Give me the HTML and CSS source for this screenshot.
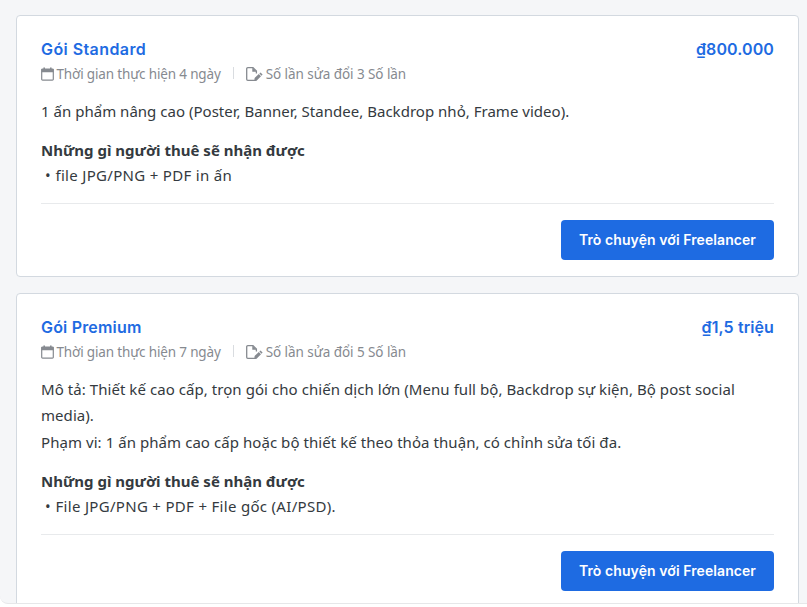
FILE: index.html
```
<!DOCTYPE html>
<html lang="vi">
<head>
    <meta charset="UTF-8">
    <meta name="viewport" content="width=device-width, initial-scale=1.0">
    <title>Gói dịch vụ</title>
    <link rel="stylesheet" href="styles.css">
</head>
<body>

<svg width="0" height="0" class="icon-defs">
    <symbol id="icon-calendar" viewBox="0 0 13 14">
        <path d="M1.6 2H11.4A.9 .9 0 0 1 12.3 2.9V12.2A.9 .9 0 0 1 11.4 13.1H1.6A.9 .9 0 0 1 .7 12.2V2.9A.9 .9 0 0 1 1.6 2Z" fill="none" stroke="currentColor" stroke-width="1.2"/>
        <path d="M.5 2H12.5V5.2H.5ZM2.4 .4H4V2.4H2.4ZM9 .4H10.6V2.4H9Z" fill="currentColor"/>
    </symbol>
    <symbol id="icon-edit" viewBox="0 0 17 14">
        <path d="M10.4 10.5V12.2A1.1 1.1 0 0 1 9.3 13.3H1.8A1.1 1.1 0 0 1 .7 12.2V1.8A1.1 1.1 0 0 1 1.8.7H7L10.4 4.1V6.5" fill="none" stroke="currentColor" stroke-width="1.3"/>
        <path d="M6.3.7V4.8H10.6ZM8.3 13.9L8.6 11L12.8 7L15 9.2L10.8 13.4ZM13.4 6.5L14.5 5.5L16.6 7.6L15.5 8.7Z" fill="currentColor"/>
    </symbol>
</svg>

<main class="packages">
    <section class="package">
        <div class="package-header">
            <h2 class="wide">Gói Standard</h2>
            <span class="price">₫800.000</span>
        </div>
        <div class="package-meta">
            <svg class="icon-calendar"><use href="#icon-calendar"/></svg>
            <span class="duration">Thời gian thực hiện 4 ngày</span>
            <i class="divider"></i>
            <svg class="icon-edit"><use href="#icon-edit"/></svg>
            <span class="revisions">Số lần sửa đổi 3 Số lần</span>
        </div>
        <p class="description">1 ấn phẩm nâng cao (Poster, Banner, Standee, Backdrop nhỏ, Frame video).</p>
        <h3>Những gì người thuê sẽ nhận được</h3>
        <ul>
            <li>file JPG/PNG + PDF in ấn</li>
        </ul>
        <div class="package-footer">
            <button class="chat-btn">Trò chuyện với Freelancer</button>
        </div>
    </section>

    <section class="package">
        <div class="package-header">
            <h2>Gói Premium</h2>
            <span class="price">₫1,5 triệu</span>
        </div>
        <div class="package-meta">
            <svg class="icon-calendar"><use href="#icon-calendar"/></svg>
            <span class="duration">Thời gian thực hiện 7 ngày</span>
            <i class="divider"></i>
            <svg class="icon-edit"><use href="#icon-edit"/></svg>
            <span class="revisions">Số lần sửa đổi 5 Số lần</span>
        </div>
        <p class="description long">Mô tả: Thiết kế cao cấp, trọn gói cho chiến dịch lớn (Menu full bộ, Backdrop sự kiện, Bộ post social<br>media).<br>Phạm vi: 1 ấn phẩm cao cấp hoặc bộ thiết kế theo thỏa thuận, có chỉnh sửa tối đa.</p>
        <h3>Những gì người thuê sẽ nhận được</h3>
        <ul>
            <li>File JPG/PNG + PDF + File gốc (AI/PSD).</li>
        </ul>
        <div class="package-footer">
            <button class="chat-btn">Trò chuyện với Freelancer</button>
        </div>
    </section>
</main>

</body>
</html>
```

FILE: styles.css
```
* {
    margin: 0;
    padding: 0;
    box-sizing: border-box;
}

body {
    font-family: "Noto Sans", sans-serif;
    font-size: 15px;
    color: #343a40;
    background: #fff;
    overflow: hidden;
}

.icon-defs {
    display: none;
}

.packages {
    height: 604px;
    padding: 15px 8px 0 16px;
    display: flex;
    flex-direction: column;
    gap: 16px;
    background: #f5f6f8;
    border-bottom: 1px solid #e6e7e9;
    border-bottom-left-radius: 8px;
    overflow: hidden;
}

.package {
    flex-shrink: 0;
    padding: 21px 24px 16px;
    background: #fff;
    border: 1px solid #d3d9e0;
    border-radius: 4px;
}

.package-header {
    display: flex;
    justify-content: space-between;
    height: 25px;
    line-height: 24px;
    font-family: Inter, sans-serif;
    font-weight: 600;
    color: #1e6be2;
}

.package-header h2 {
    font-size: 16px;
    font-weight: 600;
    letter-spacing: 0.18px;
}

.package-header .wide {
    letter-spacing: 0.42px;
}

.price {
    font-size: 16px;
    letter-spacing: 0.1px;
}

.package-meta {
    display: flex;
    align-items: center;
    height: 24px;
    font-size: 13.5px;
    color: #868a90;
    white-space: nowrap;
}

.duration {
    letter-spacing: -0.16px;
}

.revisions {
    letter-spacing: -0.06px;
}

.icon-calendar {
    width: 13px;
    height: 14px;
    margin-right: 3px;
    margin-left: -0.5px;
}

.icon-edit {
    width: 17px;
    height: 14px;
    margin-right: 3px;
}

.divider {
    width: 1px;
    height: 12px;
    margin: 0 12px 2px;
    background: #d9dce0;
}

.description {
    margin-top: 12px;
    line-height: 26.66px;
    letter-spacing: 0.02px;
    white-space: nowrap;
}

.description.long {
    letter-spacing: 0.06px;
}

h3 {
    margin-top: 13px;
    font-size: 15px;
    line-height: 25px;
    white-space: nowrap;
}

ul {
    list-style: none;
}

li {
    line-height: 25px;
    padding-left: 4px;
    letter-spacing: 0.31px;
}

li::before {
    content: "•";
    margin-right: 4.5px;
}

.package-footer {
    display: flex;
    justify-content: flex-end;
    margin-top: 15px;
    padding-top: 16px;
    border-top: 1px solid #e8eaec;
}

.chat-btn {
    width: 213px;
    height: 40px;
    font: 600 14px Inter, sans-serif;
    letter-spacing: 0.08px;
    color: #fff;
    white-space: nowrap;
    background: #1e6be2;
    border: none;
    border-radius: 4px;
}
```
